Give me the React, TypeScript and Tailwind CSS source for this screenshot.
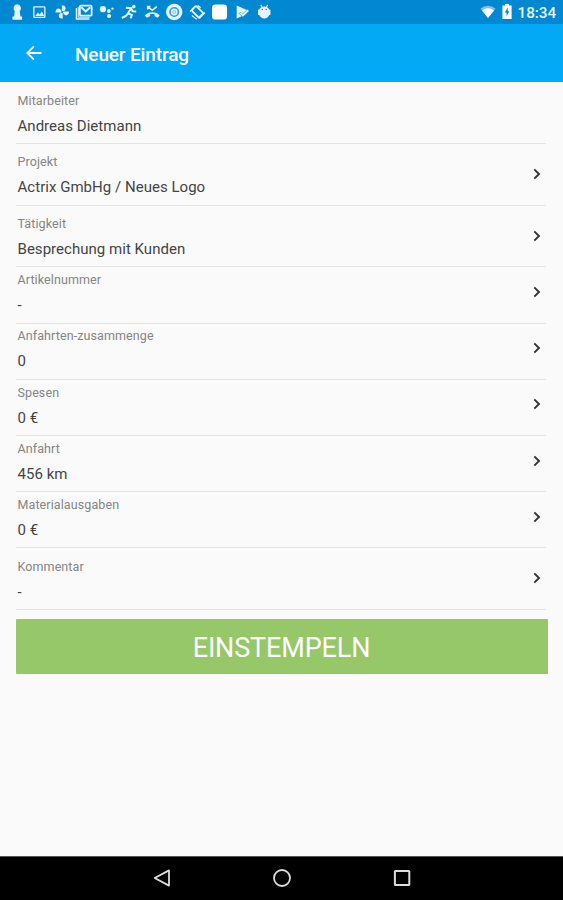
import type { ReactNode } from 'react'

interface Entry {
  label: string
  value: string
  tall?: boolean
  link?: boolean
}

const entries: Entry[] = [
  { label: 'Mitarbeiter', value: 'Andreas Dietmann', tall: true, link: false },
  { label: 'Projekt', value: 'Actrix GmbHg / Neues Logo', tall: true },
  { label: 'Tätigkeit', value: 'Besprechung mit Kunden', tall: true },
  { label: 'Artikelnummer', value: '-' },
  { label: 'Anfahrten-zusammenge', value: '0' },
  { label: 'Spesen', value: '0 €' },
  { label: 'Anfahrt', value: '456 km' },
  { label: 'Materialausgaben', value: '0 €' },
  { label: 'Kommentar', value: '-', tall: true },
]

function StatusIcon({ children }: { children: ReactNode }) {
  return (
    <svg
      className="h-[18px] w-[22.5px] text-[#e6f4fc]"
      viewBox="-2.25 0 22.5 18"
      fill="none"
      stroke="currentColor"
      strokeWidth={1.5}
    >
      {children}
    </svg>
  )
}

function StatusBar() {
  return (
    <div className="flex h-[23.5px] items-center justify-between bg-[#0288d1] pl-[5.75px] pr-[7px]">
      <div className="flex">
        {/* keyhole */}
        <StatusIcon>
          <path
            d="M9 1.3a4 4 0 0 1 2.5 6.9l.7 5.2h1.6v3.3H4.2v-3.3h1.6l.7-5.2A4 4 0 0 1 9 1.3z"
            fill="currentColor"
            stroke="none"
          />
        </StatusIcon>
        {/* picture */}
        <StatusIcon>
          <rect x="3.6" y="3.8" width="11" height="10.6" rx="0.6" strokeWidth={1.3} />
          <path d="M5 13l2.6-3.4 1.7 1.8 2.4-3 2.2 4.6z" fill="currentColor" stroke="none" />
        </StatusIcon>
        {/* pinwheel */}
        <StatusIcon>
          <g fill="currentColor" stroke="none">
            <path d="M8.6 9V2.2c3.6 0 4.8 3 3 5z" />
            <path d="M9 8.6h6.8c0 3.6-3 4.8-5 3z" />
            <path d="M9.4 9v6.8c-3.6 0-4.8-3-3-5z" />
            <path d="M9 9.4H2.2c0-3.6 3-4.8 5-3z" />
          </g>
          <circle cx="9" cy="9" r="1" fill="#0288d1" stroke="none" />
        </StatusIcon>
        {/* stacked mails */}
        <StatusIcon>
          <path d="M1.2 5v11h13" strokeWidth={1.4} />
          <path d="M3 3.8v10.4h11.6" strokeWidth={1} />
          <rect x="4.6" y="2.6" width="11.8" height="10" rx="0.8" strokeWidth={1.8} />
          <path d="M6 4.2l4.5 4.2L15 4.2" strokeWidth={2} />
        </StatusIcon>
        {/* assistant dots */}
        <StatusIcon>
          <g fill="currentColor" stroke="none">
            <circle cx="4.7" cy="6.2" r="3.1" />
            <circle cx="10.6" cy="8" r="1.9" />
            <circle cx="14.2" cy="5.6" r="1.2" />
            <circle cx="10.8" cy="13" r="2.1" />
          </g>
        </StatusIcon>
        {/* runner */}
        <StatusIcon>
          <circle cx="13.6" cy="3.6" r="1.8" fill="currentColor" stroke="none" />
          <path d="M5.6 4.8l5.4.4-3.2 5 3.8 1.8-1.2 3.4M7.8 10.6l-2.2 2.4-4 2M11 6l1.6 2.4 3.4.2" strokeWidth={2} />
        </StatusIcon>
        {/* missed call */}
        <StatusIcon>
          <path d="M4.4 3.6L9 7.4l4.6-3.8M4.4 6.4V3.6h2.8" strokeWidth={1.5} />
          <path
            d="M9 9.2c3.2 0 5.6 1.2 7.4 3.2l-2 2.4-3-1.6v-1.8c-1.6-.4-3.2-.4-4.8 0v1.8l-3 1.6-2-2.4C3.4 10.4 5.8 9.2 9 9.2z"
            fill="currentColor"
            stroke="none"
          />
        </StatusIcon>
        {/* browser ring */}
        <StatusIcon>
          <circle cx="9" cy="9" r="8.2" fill="currentColor" stroke="none" />
          <circle cx="9" cy="9" r="4.2" stroke="#2f9cd9" strokeWidth={1.6} />
          <circle cx="9" cy="9" r="1.5" stroke="#6cb9e4" strokeWidth={0.8} />
        </StatusIcon>
        {/* rotate */}
        <StatusIcon>
          <rect x="4" y="5.6" width="10.4" height="6.4" rx="0.7" transform="rotate(45 9.2 8.8)" strokeWidth={1.8} />
          <path d="M1.8 8.6L7 3M16.6 9.6L11 15.6" strokeWidth={1.4} />
          <path d="M3.6 12.4l4.8 3.8M9.4 2.4l3 2.4" strokeWidth={1.3} />
        </StatusIcon>
        <StatusIcon>
          <rect x="1.8" y="1.6" width="15" height="15" rx="3.4" fill="#fff" stroke="none" />
        </StatusIcon>
        {/* play with check */}
        <StatusIcon>
          <path d="M3.4 2.6L13.6 7l-4.2 3.6-2-1.8-1.6 1.6 2.6 2.8-5 2.2z" fill="currentColor" stroke="none" />
          <path d="M7 9.8l2.6 2.6L15 7.2" strokeWidth={2} />
        </StatusIcon>
        {/* android head */}
        <StatusIcon>
          <path d="M5.6 2l1.4 2.4M12.4 2L11 4.4" strokeWidth={1.1} />
          <path
            d="M9 3.4a5.6 5.6 0 0 1 5 3h1.2v5.6h-1.3A5.4 5.4 0 0 1 9 15.4a5.4 5.4 0 0 1-4.9-3.4H2.8V6.4H4a5.6 5.6 0 0 1 5-3z"
            fill="currentColor"
            stroke="none"
          />
          <circle cx="7" cy="6.4" r="0.7" fill="#0288d1" stroke="none" />
          <circle cx="11" cy="6.4" r="0.7" fill="#0288d1" stroke="none" />
        </StatusIcon>
      </div>

      <div className="flex items-center">
        <svg className="h-[13px] w-4" viewBox="0 0 16 13">
          <path d="M8 13L.5 3.4a12 12 0 0 1 15 0z" fill="#7fc1e6" />
          <path d="M8 13L2 5.4a9.6 9.6 0 0 1 12 0z" fill="#fff" />
        </svg>
        <svg className="ml-1.5 h-[15px] w-[10px]" viewBox="0 0 10 15">
          <path d="M3 0h4v1.6h2.6V15H.4V1.6H3z" fill="#fff" />
          <path d="M5.8 3.6L2.8 8.6h1.8v3.6L7.4 7.2H5.8z" fill="#0288d1" />
        </svg>
        <span className="ml-[6px] w-[38.5px] pt-[3px] text-[15.2px] leading-none font-medium text-[#e9f5fc]">18:34</span>
      </div>
    </div>
  )
}

function Header() {
  return (
    <header className="flex h-[58.8px] items-center bg-[#03a9f4] pl-[25px] text-white">
      <svg className="h-[18px] w-[18px]" viewBox="0 0 18 18" fill="none" stroke="currentColor" strokeWidth={1.8}>
        <path d="M16.5 9H2.4M8.9 2.4L2.3 9l6.6 6.6" />
      </svg>
      <h1 className="ml-8 pt-1 text-[19px] font-medium tracking-[-0.14px]">Neuer Eintrag</h1>
    </header>
  )
}

function EntryRow({ label, value, tall = false, link = true }: Entry) {
  return (
    <li className={`flex items-end border-b border-[#e3e3e3] pb-[7.3px] ${tall ? 'h-[61.7px]' : 'h-[56.2px]'}`}>
      <div className="flex w-full items-center justify-between">
        <div className="flex flex-col gap-[5px] pl-[1.5px]">
          <span className="text-[12.5px] leading-5 tracking-[0.1px] text-[#858585]">{label}</span>
          <span className="text-[15px] leading-5 tracking-[0.03px] text-[#444]">{value}</span>
        </div>
        {link && (
          <svg className="mb-[1.4px] mr-[5px] h-3 w-2" viewBox="0 0 8 12" fill="none" stroke="#333" strokeWidth={1.9}>
            <path d="M1.3 1.4L6 6l-4.7 4.6" />
          </svg>
        )}
      </div>
    </li>
  )
}

function NavigationBar() {
  return (
    <nav className="flex h-11 items-center justify-center gap-[102px] border-t border-[#555] bg-black pb-[2px] text-[#dcdcdc]">
      <svg className="h-[18px] w-[18px]" viewBox="0 0 18 18" fill="none" stroke="currentColor" strokeWidth={1.8} strokeLinejoin="round">
        <path d="M16 1.4v15.2L1.7 9z" />
      </svg>
      <svg className="h-[18px] w-[18px]" viewBox="0 0 18 18" fill="none" stroke="currentColor" strokeWidth={1.8}>
        <circle cx="9" cy="9" r="8" />
      </svg>
      <svg className="h-[18px] w-[18px]" viewBox="0 0 18 18" fill="none" stroke="currentColor" strokeWidth={2}>
        <rect x="1.9" y="1.9" width="14.4" height="14.2" rx="0.5" />
      </svg>
    </nav>
  )
}

export default function App() {
  return (
    <div className="flex h-[900px] w-[563px] flex-col overflow-hidden bg-[#fafafa] font-[Roboto,sans-serif]">
      <StatusBar />
      <Header />
      <main className="flex-1">
        <ul className="ml-4 mr-[17px]">
          {entries.map((entry) => (
            <EntryRow key={entry.label} {...entry} />
          ))}
        </ul>
        <button className="ml-[15.5px] mt-[9px] h-[55px] w-[532px] rounded-[1px] bg-[#96c769] pt-1 text-[27px] tracking-[-0.15px] text-white">
          EINSTEMPELN
        </button>
      </main>
      <NavigationBar />
    </div>
  )
}
